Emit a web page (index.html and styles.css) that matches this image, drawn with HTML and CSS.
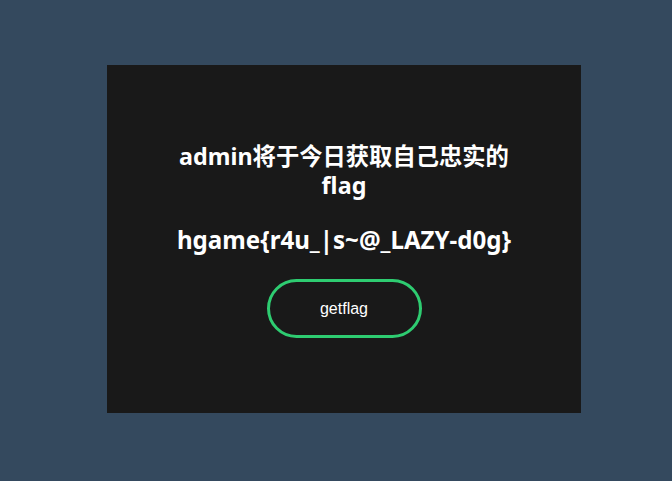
FILE: index.html
```html
<!DOCTYPE html>
<html>
<head>
<meta charset="utf-8">
<link rel="stylesheet" href="styles.css">
</head>
<body>
<div class="card">
  <h2 class="title">admin将于今日获取自己忠实的<br>flag</h2>
  <h2 class="flag">hgame{r4u_|s~@_LAZY-d0g}</h2>
  <button class="btn">getflag</button>
</div>
</body>
</html>
```
FILE: styles.css
```css
html, body {
  margin: 0;
  padding: 0;
  background: #34495e;
  width: 672px;
  height: 481px;
  overflow: hidden;
}
.card {
  box-sizing: border-box;
  margin: 65px 0 0 107px;
  width: 474px;
  height: 348px;
  background: #191919;
  display: flex;
  flex-direction: column;
  align-items: center;
  padding-top: 77px;
}
.title, .flag {
  margin: 0;
  color: #fff;
  font-family: "Noto Sans", "Noto Sans CJK SC", sans-serif;
  font-weight: 700;
  font-size: 23.3px;
  line-height: 29px;
  text-align: center;
}
.flag {
  margin-top: 25px;
  font-size: 24.1px;
}
.btn {
  margin-top: 25px;
  box-sizing: border-box;
  width: 155px;
  height: 59px;
  border: 3px solid #2ecc71;
  border-radius: 30px;
  background: transparent;
  color: #fff;
  font-family: "Liberation Sans", Arial, sans-serif;
  font-size: 16px;
  padding: 0;
}
```
